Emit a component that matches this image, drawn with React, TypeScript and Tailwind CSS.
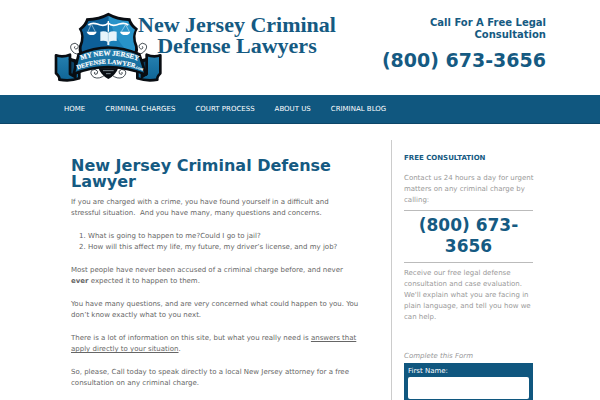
import type { ReactNode } from "react";

const navItems = ["Home", "Criminal Charges", "Court Process", "About Us", "Criminal Blog"];

function ShieldLogo() {
  return (
    <svg
      viewBox="0 0 360 255"
      className="h-[85px] w-[120px] shrink-0"
      role="img"
      aria-label="My New Jersey Defense Lawyer"
    >
      <defs>
        <linearGradient id="ribbon" x1="0" y1="0" x2="0" y2="1">
          <stop offset="0" stopColor="#2681b1" />
          <stop offset="1" stopColor="#0f6596" />
        </linearGradient>
        <path id="arcTop" d="M88 167 Q175 135 270 169" />
        <path id="arcBottom" d="M76 196 Q175 155 284 200" />
      </defs>

      {/* Scrolls beside the shield */}
      <g fill="none" stroke="#222b33" strokeWidth="2.5">
        <path d="M94 146 Q78 150 69 141 Q57 128 65 118 Q76 110 84 120 Q87 131 77 132 Q70 129 75 124" />
        <path d="M256 146 Q272 150 281 141 Q295 128 287 118 Q276 110 268 120 Q265 131 275 132 Q282 129 277 124" />
        <path d="M166 209 Q148 224 132 217 Q118 207 125 196 Q136 189 143 199 Q144 209 135 208 Q131 204 135 201" />
        <path d="M184 209 Q202 224 218 217 Q232 207 225 196 Q214 189 207 199 Q206 209 215 208 Q219 204 215 201" />
      </g>

      {/* Shield */}
      <path
        d="M175 23 Q202 38 241 40 Q246 59 264 71 Q249 91 263 123 Q268 145 250 168 H100 Q82 145 87 123 Q101 91 86 71 Q104 59 109 40 Q148 38 175 23Z"
        fill="#090d12"
      />
      <path d="M175 32 Q151 46 115 48 Q110 64 95 74 Q107 94 95 125 Q93 140 102 150 H175Z" fill="#0d5f98" />
      <path d="M175 32 Q199 46 235 48 Q240 64 255 74 Q243 94 255 125 Q257 140 248 150 H175Z" fill="#2793c9" />
      <path d="M175 38 V150 H245 Q200 115 175 38Z" fill="#1a7fb7" />
      <path d="M143 184 H207 Q197 212 175 222 Q153 212 143 184Z" fill="#090d12" />
      <path d="M151 188 H199 M159 197 H191 M168 206 H182" stroke="#7b8890" strokeWidth="3" />

      {/* Scales and book */}
      <g fill="none" stroke="#fff">
        <path d="M115 60 Q126 52 142 57 Q164 66 175 54 Q186 66 208 57 Q224 52 235 60" strokeWidth="5" />
        <path d="M123 59 L114 80 M125 59 L136 80 M227 59 L214 80 M227 59 L238 80" strokeWidth="1.5" />
        <path d="M175 48 V80" strokeWidth="4" />
      </g>
      <path d="M110 80 H140 Q137 90 125 90 Q113 90 110 80Z" fill="#fff" />
      <path d="M210 80 H241 Q238 90 226 90 Q213 90 210 80Z" fill="#fff" />
      <path d="M151 80 Q164 77 175 83 Q187 77 200 80 V108 Q187 105 178 110 V120 H172 V110 Q164 105 151 108Z" fill="#e6f4fb" />
      <path d="M175 84 V109" stroke="#9cc6dd" strokeWidth="2" />

      {/* Ribbon */}
      <g stroke="#090d12" strokeWidth="8" strokeLinejoin="round">
        <path d="M18 151 Q38 158 60 149 V163 L88 170 V220 Q60 230 28 224 Q30 216 18 205Z" fill="url(#ribbon)" />
        <path d="M331 151 Q311 158 290 149 V163 L262 170 V220 Q292 230 322 224 Q320 216 331 205Z" fill="url(#ribbon)" />
        <path d="M60 163 L76 170 V216 L60 207Z" fill="#0a4266" />
        <path d="M290 163 L276 170 V216 L290 207Z" fill="#0a4266" />
        <path d="M86 148 Q175 107 268 148 L288 209 Q175 164 71 207Z" fill="url(#ribbon)" />
      </g>
      <g className="font-['Liberation_Serif',serif] font-bold" fill="#fff" stroke="#fff" strokeWidth="0.5">
        <text fontSize="21">
          <textPath href="#arcTop" startOffset="50%" textAnchor="middle">
            MY NEW JERSEY
          </textPath>
        </text>
        <text fontSize="19">
          <textPath href="#arcBottom" startOffset="50%" textAnchor="middle">
            DEFENSE LAWYER<tspan fontSize="9">.COM</tspan>
          </textPath>
        </text>
      </g>
    </svg>
  );
}

function Paragraph({ children }: { children: ReactNode }) {
  return <p className="mt-3">{children}</p>;
}

export default function App() {
  return (
    <div className="bg-white font-['DejaVu_Sans',sans-serif] text-[7px] leading-[11px] text-[#666]">
      <header className="mx-auto flex w-full max-w-[500px] items-start py-[5px]">
        <a href="#" className="flex text-[#155a82]">
          <ShieldLogo />
          <span className="-ml-8 pt-[9px] text-center font-['Liberation_Serif',serif] text-[22px] leading-[21px] font-bold whitespace-nowrap">
            New Jersey Criminal
            <br />
            Defense Lawyers
          </span>
        </a>
        <div className="ml-auto pt-3 pr-1 text-right font-bold text-[#155a82]">
          <p className="text-[10px] leading-[12px]">
            Call For A Free Legal
            <br />
            Consultation
          </p>
          <p className="pt-2 text-[19px] leading-[22px] whitespace-nowrap">(800) 673-3656</p>
        </div>
      </header>

      <nav className="border-b border-[#0c4668] bg-[#10577f] text-white">
        <ul className="mx-auto flex h-7 w-full max-w-[492px] items-center gap-5 px-[10px] uppercase">
          {navItems.map((item) => (
            <li key={item}>
              <a href="#">{item}</a>
            </li>
          ))}
        </ul>
      </nav>

      <div className="mx-auto flex w-full max-w-[492px] pt-4">
        <main className="flex-1 pt-[18px] pr-8 pl-[17px]">
          <h1 className="text-[16px] leading-[16px] font-bold text-[#155a82]">New Jersey Criminal Defense Lawyer</h1>
          <p className="mt-[7px]">
            If you are charged with a crime, you have found yourself in a difficult and stressful situation.&nbsp; And
            you have many, many questions and concerns.
          </p>
          <ol className="mt-3 list-decimal pl-[17px]">
            <li>What is going to happen to me?Could I go to jail?</li>
            <li>How will this affect my life, my future, my driver’s license, and my job?</li>
          </ol>
          <Paragraph>
            Most people have never been accused of a criminal charge before, and never <strong>ever</strong> expected
            it to happen to them.
          </Paragraph>
          <Paragraph>
            You have many questions, and are very concerned what could happen to you. You don’t know exactly what to
            you next.
          </Paragraph>
          <Paragraph>
            There is a lot of information on this site, but what you really need is{" "}
            <a href="#" className="underline">
              answers that apply directly to your situation
            </a>
            .
          </Paragraph>
          <Paragraph>
            So, please, Call today to speak directly to a local New Jersey attorney for a free consultation on any
            criminal charge.
          </Paragraph>
        </main>

        <aside className="w-[155px] border-l border-[#ccc] pt-[13px] pr-[13px] pl-3 text-[#999]">
          <h2 className="font-bold text-[#155a82] uppercase">Free Consultation</h2>
          <p className="-mr-2 mt-[9px]">
            Contact us 24 hours a day for urgent matters on any criminal charge by calling:
          </p>
          <p className="mt-1 border-y border-[#bbb] pt-1 pb-[5px] text-center text-[17px] leading-[21px] font-bold text-[#155a82]">
            (800) 673-3656
          </p>
          <p className="mt-[5px]">
            Receive our free legal defense consultation and case evaluation. We'll explain what you are facing in plain
            language, and tell you how we can help.
          </p>
          <p className="mt-7 italic">Complete this Form</p>
          <form className="mt-px bg-[#10577f] px-1 pt-[3px] pb-2 text-white">
            <label htmlFor="first-name" className="block">
              First Name:
            </label>
            <input id="first-name" type="text" className="block h-[22px] w-full rounded-xs bg-white px-1 text-[#333]" />
          </form>
        </aside>
      </div>
    </div>
  );
}
